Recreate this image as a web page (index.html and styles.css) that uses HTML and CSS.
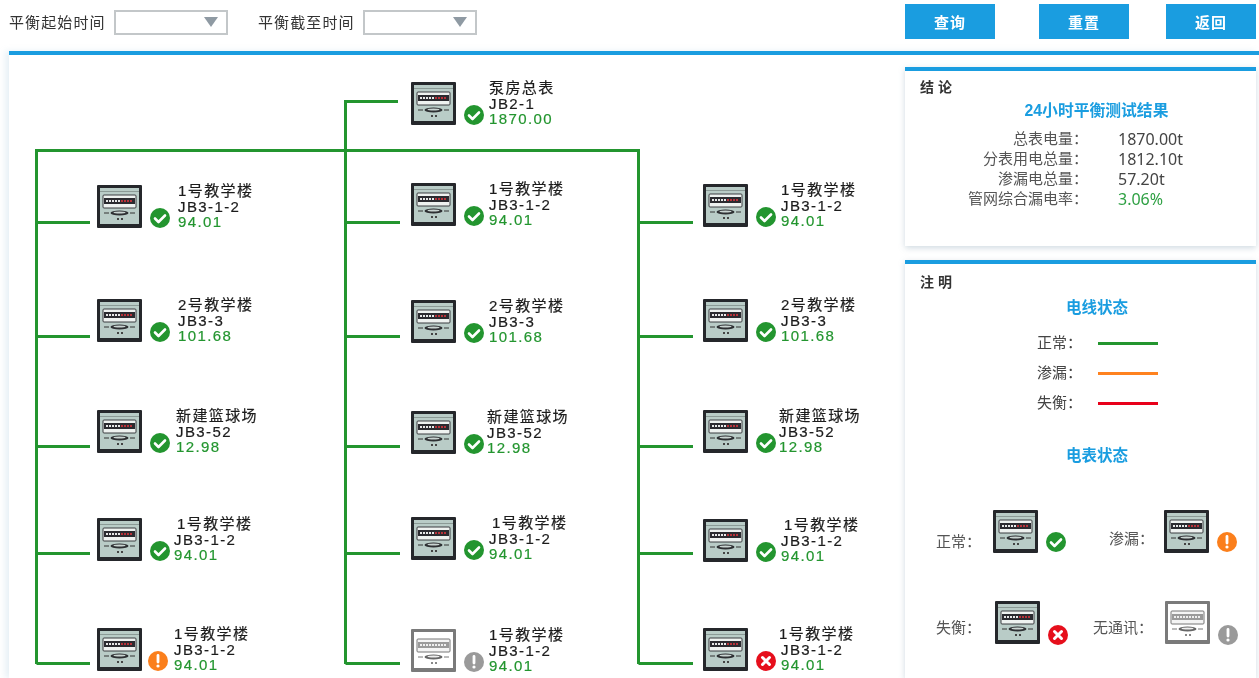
FILE: index.html
```html
<!DOCTYPE html>
<html lang="zh-CN">
<head>
<meta charset="utf-8">
<title>24小时平衡测试结果</title>
<link rel="stylesheet" href="styles.css">
</head>
<body>
<svg class="defs" aria-hidden="true">
  <symbol id="meter" viewBox="0 0 45 43">
    <rect width="45" height="43" rx="1" fill="#25272b"/>
    <rect x="3" y="3" width="39" height="36" fill="#b9ccc7"/>
    <rect x="3" y="6" width="39" height="1" fill="#8b9a96"/>
    <rect x="6" y="10" width="33" height="13" rx="1" fill="#eef2f0" stroke="#3a3c40" stroke-width="1"/>
    <rect x="7" y="13" width="31" height="6" fill="#2b2b30"/>
    <path d="M9 16h14" stroke="#e8e8e8" stroke-width="2" stroke-dasharray="2 1"/>
    <path d="M24 16h12" stroke="#b8323a" stroke-width="2" stroke-dasharray="2 1"/>
    <path d="M7 28h5M33 28h5" stroke="#333" stroke-width="1"/>
    <ellipse cx="22.500" cy="28" rx="9" ry="2.500" fill="#2e3033"/>
    <ellipse cx="22.500" cy="27.500" rx="6" ry="1" fill="#c9d4d1"/>
    <path d="M20 34h2M24 34h2" stroke="#444" stroke-width="2"/>
  </symbol>
  <symbol id="meter-off" viewBox="0 0 45 43">
    <rect width="45" height="43" rx="1" fill="#7a7a7a"/>
    <rect x="3" y="3" width="39" height="36" fill="#fff"/>
    <rect x="6" y="10" width="33" height="13" rx="1" fill="#f4f4f4" stroke="#777" stroke-width="1"/>
    <rect x="7" y="13" width="31" height="6" fill="#9a9a9a"/>
    <path d="M9 16h27" stroke="#eee" stroke-width="2" stroke-dasharray="2 1"/>
    <path d="M7 28h5M33 28h5" stroke="#777" stroke-width="1"/>
    <ellipse cx="22.500" cy="28" rx="9" ry="2.500" fill="#666"/>
    <ellipse cx="22.500" cy="27.500" rx="6" ry="1" fill="#eee"/>
    <path d="M20 34h2M24 34h2" stroke="#888" stroke-width="2"/>
  </symbol>
  <symbol id="ok" viewBox="0 0 20 20">
    <circle cx="10" cy="10" r="10" fill="#23952f"/>
    <path d="M5 10.500l3.500 3.500 6.500-6.500" fill="none" stroke="#fff" stroke-width="2.600" stroke-linecap="round" stroke-linejoin="round"/>
  </symbol>
  <symbol id="warn" viewBox="0 0 20 20">
    <circle cx="10" cy="10" r="10" fill="#fb7f1c"/>
    <path d="M10 4.500v6.500" stroke="#fff" stroke-width="2.800" stroke-linecap="round"/>
    <circle cx="10" cy="15" r="1.600" fill="#fff"/>
  </symbol>
  <symbol id="err" viewBox="0 0 20 20">
    <circle cx="10" cy="10" r="10" fill="#e60f1c"/>
    <path d="M6.500 6.500l7 7M13.500 6.500l-7 7" stroke="#fff" stroke-width="3" stroke-linecap="round"/>
  </symbol>
  <symbol id="off" viewBox="0 0 20 20">
    <circle cx="10" cy="10" r="10" fill="#9a9a9a"/>
    <path d="M10 4.500v6.500" stroke="#fff" stroke-width="2.800" stroke-linecap="round"/>
    <circle cx="10" cy="15" r="1.600" fill="#fff"/>
  </symbol>
</svg>

<div class="page">
  <header class="toolbar">
    <div class="filter">
      <span class="filter-label">平衡起始时间</span>
      <div class="select"><span class="arrow"></span></div>
    </div>
    <div class="filter filter-end">
      <span class="filter-label">平衡截至时间</span>
      <div class="select"><span class="arrow"></span></div>
    </div>
    <div class="actions">
      <button class="btn">查询</button>
      <button class="btn">重置</button>
      <button class="btn">返回</button>
    </div>
  </header>

  <main class="main">
    <section class="diagram">
      <svg class="wires" width="890" height="623" viewBox="9 55 890 623">
        <path d="M36.500 664V150.500H638.500V664M345.500 664V101.500H398M36.500 222.500H90M36.500 336.500H90M36.500 446.500H90M36.500 553.500H90M36.500 663.500H90M345.500 222.500H400M345.500 336.500H400M345.500 446.500H400M345.500 553.500H400M345.500 663.500H400M638.500 222.500H693M638.500 336.500H693M638.500 446.500H693M638.500 553.500H693M638.500 663.500H693" fill="none" stroke="#23952f" stroke-width="3"/>
      </svg>

      <div class="node c-top">
        <svg class="meter"><use href="#meter"/></svg><svg class="status"><use href="#ok"/></svg>
        <div class="label label-c"><div>泵房总表</div><div>JB2-1</div><div class="val">1870.00</div></div>
      </div>

      <div class="node l1">
        <svg class="meter"><use href="#meter"/></svg><svg class="status"><use href="#ok"/></svg>
        <div class="label label-wide"><div>1号教学楼</div><div>JB3-1-2</div><div class="val">94.01</div></div>
      </div>
      <div class="node l2">
        <svg class="meter"><use href="#meter"/></svg><svg class="status"><use href="#ok"/></svg>
        <div class="label label-wide"><div>2号教学楼</div><div>JB3-3</div><div class="val">101.68</div></div>
      </div>
      <div class="node l3">
        <svg class="meter"><use href="#meter"/></svg><svg class="status"><use href="#ok"/></svg>
        <div class="label label-l3"><div>新建篮球场</div><div>JB3-52</div><div class="val">12.98</div></div>
      </div>
      <div class="node l4">
        <svg class="meter"><use href="#meter"/></svg><svg class="status"><use href="#ok"/></svg>
        <div class="label label-low"><div class="name-r4">1号教学楼</div><div>JB3-1-2</div><div class="val">94.01</div></div>
      </div>
      <div class="node l5">
        <svg class="meter"><use href="#meter"/></svg><svg class="status status-l5"><use href="#warn"/></svg>
        <div class="label label-low"><div>1号教学楼</div><div>JB3-1-2</div><div class="val">94.01</div></div>
      </div>

      <div class="node c1">
        <svg class="meter"><use href="#meter"/></svg><svg class="status"><use href="#ok"/></svg>
        <div class="label label-c"><div>1号教学楼</div><div>JB3-1-2</div><div class="val">94.01</div></div>
      </div>
      <div class="node c2">
        <svg class="meter"><use href="#meter"/></svg><svg class="status"><use href="#ok"/></svg>
        <div class="label label-c"><div>2号教学楼</div><div>JB3-3</div><div class="val">101.68</div></div>
      </div>
      <div class="node c3">
        <svg class="meter"><use href="#meter"/></svg><svg class="status"><use href="#ok"/></svg>
        <div class="label label-mid"><div>新建篮球场</div><div>JB3-52</div><div class="val">12.98</div></div>
      </div>
      <div class="node c4">
        <svg class="meter"><use href="#meter"/></svg><svg class="status"><use href="#ok"/></svg>
        <div class="label label-c"><div class="name-r4">1号教学楼</div><div>JB3-1-2</div><div class="val">94.01</div></div>
      </div>
      <div class="node c5">
        <svg class="meter"><use href="#meter-off"/></svg><svg class="status"><use href="#off"/></svg>
        <div class="label label-c"><div>1号教学楼</div><div>JB3-1-2</div><div class="val">94.01</div></div>
      </div>

      <div class="node r1">
        <svg class="meter"><use href="#meter"/></svg><svg class="status"><use href="#ok"/></svg>
        <div class="label label-c"><div>1号教学楼</div><div>JB3-1-2</div><div class="val">94.01</div></div>
      </div>
      <div class="node r2">
        <svg class="meter"><use href="#meter"/></svg><svg class="status"><use href="#ok"/></svg>
        <div class="label label-c"><div>2号教学楼</div><div>JB3-3</div><div class="val">101.68</div></div>
      </div>
      <div class="node r3">
        <svg class="meter"><use href="#meter"/></svg><svg class="status"><use href="#ok"/></svg>
        <div class="label label-mid"><div>新建篮球场</div><div>JB3-52</div><div class="val">12.98</div></div>
      </div>
      <div class="node r4">
        <svg class="meter"><use href="#meter"/></svg><svg class="status"><use href="#ok"/></svg>
        <div class="label label-c"><div class="name-r4">1号教学楼</div><div>JB3-1-2</div><div class="val">94.01</div></div>
      </div>
      <div class="node r5">
        <svg class="meter"><use href="#meter"/></svg><svg class="status"><use href="#err"/></svg>
        <div class="label label-c"><div class="name-r5">1号教学楼</div><div>JB3-1-2</div><div class="val">94.01</div></div>
      </div>
    </section>

    <aside class="side">
      <section class="panel panel-result">
        <h2 class="panel-title">结 论</h2>
        <h3 class="sub-title">24小时平衡测试结果</h3>
        <dl class="stats">
          <dt>总表电量：</dt><dd>1870.00t</dd>
          <dt>分表用电总量：</dt><dd>1812.10t</dd>
          <dt>渗漏电总量：</dt><dd>57.20t</dd>
          <dt>管网综合漏电率：</dt><dd class="rate">3.06%</dd>
        </dl>
      </section>

      <section class="panel panel-notes">
        <h2 class="panel-title">注 明</h2>
        <h3 class="sub-title sub-wire">电线状态</h3>
        <ul class="wire-legend">
          <li><span>正常：</span><i class="swatch swatch-green"></i></li>
          <li><span>渗漏：</span><i class="swatch swatch-orange"></i></li>
          <li><span>失衡：</span><i class="swatch swatch-red"></i></li>
        </ul>
        <h3 class="sub-title sub-meter">电表状态</h3>
        <div class="meter-legend">
          <div class="item item-a"><span class="item-label">正常：</span><div class="glyph"><svg class="meter"><use href="#meter"/></svg><svg class="status"><use href="#ok"/></svg></div></div>
          <div class="item item-b"><span class="item-label">渗漏：</span><div class="glyph"><svg class="meter"><use href="#meter"/></svg><svg class="status"><use href="#warn"/></svg></div></div>
          <div class="item item-c"><span class="item-label">失衡：</span><div class="glyph"><svg class="meter"><use href="#meter"/></svg><svg class="status"><use href="#err"/></svg></div></div>
          <div class="item item-d"><span class="item-label">无通讯：</span><div class="glyph"><svg class="meter"><use href="#meter-off"/></svg><svg class="status"><use href="#off"/></svg></div></div>
        </div>
      </section>
    </aside>
  </main>
</div>
</body>
</html>
```

FILE: styles.css
```css
* { box-sizing: border-box; }

html, body {
  margin: 0;
  height: 678px;
  overflow: hidden;
  background: #fff;
}

body {
  font-family: "Liberation Sans", "Noto Sans CJK SC", sans-serif;
  color: #333;
}

.defs { display: none; }

.page {
  width: 1259px;
  height: 678px;
  display: flex;
  flex-direction: column;
  overflow: hidden;
  filter: blur(0.4px);
}

/* toolbar */
.toolbar {
  height: 51px;
  padding: 4px 3px 0 9px;
  display: flex;
  align-items: flex-start;
  flex: none;
}

.filter {
  display: flex;
  align-items: center;
  gap: 9px;
  margin-top: 6px;
}

.filter-end { margin-left: 30px; }

.filter-label {
  font-size: 15px;
  letter-spacing: 1.1px;
  width: 96px;
  white-space: nowrap;
  color: #333;
  padding-bottom: 2px;
}

.select {
  width: 114px;
  height: 25px;
  border: 2px solid #c3c7c9;
  background: #fff;
  position: relative;
  padding-top: 5px;
  padding-left: 88px;
}

.arrow {
  display: block;
  width: 0;
  height: 0;
  border-left: 7px solid transparent;
  border-right: 7px solid transparent;
  border-top: 10px solid #8f9aa3;
}

.actions {
  margin-left: auto;
  display: flex;
}

.btn {
  width: 90px;
  height: 35px;
  border: 0;
  padding: 0;
  background: #1a9de0;
  color: #fff;
  font: bold 15px "Liberation Sans", "Noto Sans CJK SC", sans-serif;
  letter-spacing: 1px;
}

.btn + .btn { margin-left: 44px; }
.btn:last-child { margin-left: 37px; }

/* main */
.main {
  flex: 1;
  margin-left: 9px;
  border-top: 4px solid #1a9de0;
  display: flex;
  box-shadow: -4px 0 6px rgba(150, 190, 215, .22);
  min-height: 0;
}

.diagram {
  position: relative;
  width: 896px;
  flex: none;
}

.wires {
  position: absolute;
  left: 0;
  top: 0;
}

.node {
  position: absolute;
  width: 45px;
  height: 43px;
}

.meter {
  display: block;
  width: 45px;
  height: 43px;
}

.status {
  position: absolute;
  left: 53px;
  top: 23px;
  width: 20px;
  height: 20px;
}

.status-l5 { left: 51px; }

.label {
  position: absolute;
  top: -2px;
  white-space: nowrap;
  font-size: 15px;
  line-height: 15.5px;
  letter-spacing: 1.4px;
  color: #1c1c1c;
  -webkit-text-stroke: 0.2px currentColor;
}

.label-wide { left: 81px; }
.label-c { left: 78px; }
.label-mid { left: 76px; }
.label-low { left: 77px; }
.label-l3 { left: 79px; }

.name-r4 { margin-left: 3px; }
.name-r5 { margin-left: -2px; }

.val { color: #23952f; }

/* node positions on the diagram canvas (page y minus 55, x minus 9) */
.c-top { left: 402px; top: 27px; }

.l1 { left: 88px; top: 130px; }
.l2 { left: 88px; top: 244px; }
.l3 { left: 88px; top: 355px; }
.l4 { left: 88px; top: 463px; }
.l5 { left: 88px; top: 573px; }

.c1 { left: 402px; top: 128px; }
.c2 { left: 402px; top: 245px; }
.c3 { left: 402px; top: 356px; }
.c4 { left: 402px; top: 462px; }
.c5 { left: 402px; top: 574px; }

.r1 { left: 694px; top: 129px; }
.r2 { left: 694px; top: 244px; }
.r3 { left: 694px; top: 355px; }
.r4 { left: 694px; top: 464px; }
.r5 { left: 694px; top: 573px; }

/* side */
.side {
  width: 351px;
  flex: none;
  padding-top: 12px;
  display: flex;
  flex-direction: column;
  gap: 14px;
}

.panel {
  border-top: 4px solid #1a9de0;
  background: #fff;
  box-shadow: 0 2px 6px rgba(120, 150, 170, .35);
}

.panel-result { height: 179px; }
.panel-notes { flex: 1; min-height: 0; }

.panel-title {
  margin: 0;
  padding: 7px 0 0 15px;
  font-size: 14px;
  line-height: 18px;
  font-weight: bold;
  color: #333;
}

.panel-notes .panel-title { padding-top: 9px; }

.sub-title {
  margin: 0;
  text-align: center;
  font-size: 15.500px;
  line-height: 18px;
  font-weight: bold;
  color: #1a9de0;
  padding-left: 33px;
}

.panel-result .sub-title {
  font-size: 15.800px;
  margin-top: 6px;
  padding-left: 32px;
}

.stats {
  margin: 9px 0 0;
  display: grid;
  grid-template-columns: 183px 1fr;
  column-gap: 30px;
  font-size: 15px;
  line-height: 20px;
}

.stats dt {
  text-align: right;
  color: #555;
}

.stats dd {
  margin: 0;
  font-family: "Noto Sans", "Noto Sans CJK SC", sans-serif;
  font-size: 16px;
  color: #444;
}

.stats .rate { color: #2ea043; }

.sub-wire { margin-top: 8px; }

.wire-legend {
  list-style: none;
  margin: 11px 0 0;
  padding: 0 0 0 132px;
  font-size: 15px;
  color: #444;
}

.wire-legend li {
  display: flex;
  align-items: center;
  height: 30px;
  line-height: 30px;
}

.wire-legend span { width: 61px; }

.swatch {
  display: block;
  width: 60px;
  height: 3px;
}

.swatch-green { background: #23952f; }
.swatch-orange { background: #ff821f; }
.swatch-red { background: #e8001a; }

.sub-meter { margin-top: 29px; }

.meter-legend {
  display: grid;
  grid-template-columns: 157px 1fr;
  row-gap: 48px;
  padding-left: 31px;
  margin-top: 45px;
  font-size: 15px;
  color: #555;
}

.item {
  display: flex;
  align-items: flex-end;
}

.item-label {
  line-height: 20px;
  white-space: nowrap;
}

.glyph {
  position: relative;
  width: 45px;
  height: 43px;
}

.glyph .status { top: 22px; }

.item-a .item-label { width: 57px; margin-bottom: 1px; }
.item-b { margin-top: -1px; }
.item-b .item-label { width: 71px; padding-left: 16px; margin-bottom: 4px; }
.item-c .item-label { width: 59px; margin-bottom: 6px; }
.item-d .item-label { width: 72px; margin-bottom: 6px; }
.item-c .glyph .status, .item-d .glyph .status { top: 24px; }
```
